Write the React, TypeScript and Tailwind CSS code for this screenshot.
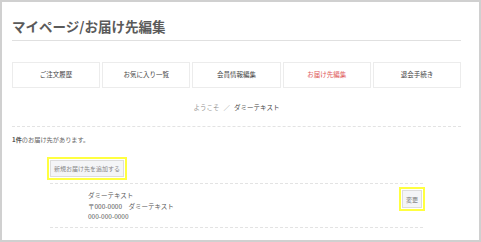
const tabs = ['ご注文履歴', 'お気に入り一覧', '会員情報編集', 'お届け先編集', '退会手続き'];

export default function App() {
  return (
    <div className="w-[481px] h-[242px] overflow-hidden border-2 border-[#d0d0d0] bg-white pl-[10px] pr-[18px] font-['Noto_Sans_CJK_JP','Liberation_Sans',sans-serif] text-[#555]">
      {/* Title */}
      <h1 className="pt-[14px] pb-[4px] border-b border-[#e0e0e0] text-[13.5px] leading-[20px] font-bold text-[#5a5a5a]">
        マイページ/お届け先編集
      </h1>

      {/* Tabs */}
      <div className="mt-[21px] grid grid-cols-5 gap-[2px]">
        {tabs.map((t) => (
          <div
            key={t}
            className={`h-[26px] flex items-center justify-center border border-[#ececec] text-[6.5px] ${
              t === 'お届け先編集' ? 'text-[#e05a5a]' : 'text-[#444]'
            }`}
          >
            {t}
          </div>
        ))}
      </div>

      {/* Welcome */}
      <div className="mt-[14px] flex justify-center gap-[4px] text-[6.5px] leading-[10px]">
        <span className="text-[#999]">ようこそ</span>
        <span className="text-[#999]">／</span>
        <span className="text-[#444]">ダミーテキスト</span>
      </div>
      <div className="mt-[14px] border-b border-dashed border-[#e3e3e3]" />

      {/* Count */}
      <p className="mt-[8px] text-[6.2px] leading-[10px] text-[#666]">
        <span className="font-bold text-[#555]">1件</span>のお届け先があります。
      </p>

      {/* Add button */}
      <div className="ml-[35px] mt-[12px] w-[80px] border-2 border-[#ffff40] p-px">
        <button className="w-full h-[17px] bg-[#f4f5f7] border border-[#dcdcdc] text-[6px] text-[#888] flex items-center justify-center whitespace-nowrap">
          新規お届け先を追加する
        </button>
      </div>

      {/* Address list */}
      <div className="ml-[38px] w-[373px] mt-[3px] border-t border-dashed border-[#e3e3e3]">
        <div className="h-[44px] flex items-start justify-between border-b border-dashed border-[#e3e3e3] pt-[3px]">
          <div className="pl-[38px] pt-[3px] text-[6.5px] leading-[10.5px] text-[#555]">
            <div>ダミーテキスト</div>
            <div>〒000-0000　ダミーテキスト</div>
            <div>000-000-0000</div>
          </div>
          <div className="-mr-[2px] w-[26px] h-[24px] border-2 border-[#ffff40] p-px">
            <button className="w-full h-full bg-[#f4f5f7] border border-[#dcdcdc] text-[6px] text-[#777] flex items-center justify-center">
              変更
            </button>
          </div>
        </div>
      </div>
    </div>
  );
}
